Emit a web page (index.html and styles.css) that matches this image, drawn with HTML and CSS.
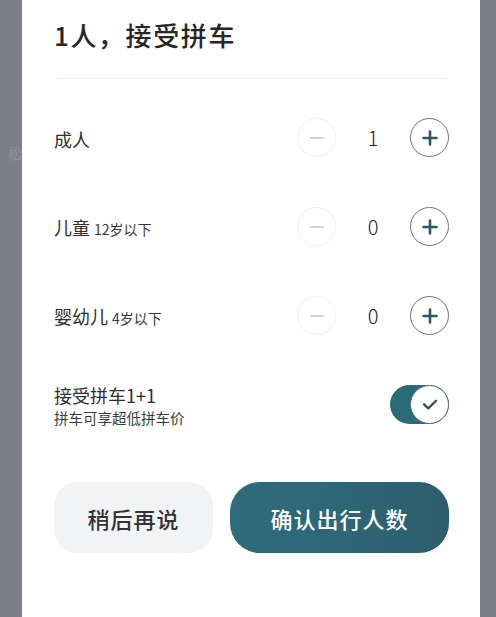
FILE: index.html
```html
<!DOCTYPE html>
<html lang="zh-CN">
<head>
<meta charset="utf-8">
<link rel="stylesheet" href="styles.css">
</head>
<body>
<div class="side side-left"><span class="ghost">松</span></div>
<div class="sheet">
  <h1 class="title">1人，接受拼车</h1>
  <div class="divider"></div>

  <div class="row">
    <div class="label">成人</div>
    <div class="stepper">
      <span class="btn btn-minus"><svg viewBox="0 0 24 24" width="24" height="24"><path d="M6 12h12" /></svg></span>
      <span class="count">1</span>
      <span class="btn btn-plus"><svg viewBox="0 0 24 24" width="24" height="24"><path d="M12 5.5v13M5.5 12h13" /></svg></span>
    </div>
  </div>

  <div class="row">
    <div class="label">儿童 <small>12岁以下</small></div>
    <div class="stepper">
      <span class="btn btn-minus"><svg viewBox="0 0 24 24" width="24" height="24"><path d="M6 12h12" /></svg></span>
      <span class="count">0</span>
      <span class="btn btn-plus"><svg viewBox="0 0 24 24" width="24" height="24"><path d="M12 5.5v13M5.5 12h13" /></svg></span>
    </div>
  </div>

  <div class="row">
    <div class="label">婴幼儿 <small>4岁以下</small></div>
    <div class="stepper">
      <span class="btn btn-minus"><svg viewBox="0 0 24 24" width="24" height="24"><path d="M6 12h12" /></svg></span>
      <span class="count">0</span>
      <span class="btn btn-plus"><svg viewBox="0 0 24 24" width="24" height="24"><path d="M12 5.5v13M5.5 12h13" /></svg></span>
    </div>
  </div>

  <div class="row row-pool">
    <div class="pool-text">
      <div class="pool-title">接受拼车1+1</div>
      <div class="pool-sub">拼车可享超低拼车价</div>
    </div>
    <div class="toggle">
      <span class="knob"><svg viewBox="0 0 24 24" width="26" height="26"><path d="M6.5 12.3l3.9 3.7 7.2-7" /></svg></span>
    </div>
  </div>

  <div class="actions">
    <button class="action action-later">稍后再说</button>
    <button class="action action-confirm">确认出行人数</button>
  </div>
</div>
<div class="side side-right"></div>
</body>
</html>
```

FILE: styles.css
```css
html, body {
  margin: 0;
  padding: 0;
}
body {
  width: 496px;
  height: 617px;
  overflow: hidden;
  display: flex;
  background: #7c7f87;
  font-family: "Noto Sans CJK SC", "Noto Sans", sans-serif;
  color: #222;
}
.side {
  flex: none;
  overflow: hidden;
}
.side-left {
  width: 22px;
}
.side-right {
  width: 16px;
}
.ghost {
  display: block;
  padding-top: 143px;
  padding-left: 8px;
  font-size: 14px;
  color: #8f9299;
  white-space: nowrap;
}
.sheet {
  flex: none;
  width: 458px;
  background: #fff;
  box-sizing: border-box;
  padding: 0 31px 0 32px;
}
.title {
  margin: 0;
  padding-top: 17px;
  font-size: 26px;
  line-height: 36px;
  font-weight: 500;
  letter-spacing: 1.6px;
  color: #262626;
}
.divider {
  margin: 25px 3px 14px;
  height: 1px;
  background: #ebebeb;
}
.row {
  height: 89px;
  display: flex;
  align-items: center;
  justify-content: space-between;
}
.label {
  font-size: 18px;
  line-height: 26px;
  color: #2e2e2e;
  padding-top: 3px;
}
.label small {
  font-size: 14px;
  color: #3a3a3a;
}
.stepper {
  display: flex;
  align-items: center;
}
.btn {
  width: 39px;
  height: 39px;
  box-sizing: border-box;
  border-radius: 50%;
  display: flex;
  align-items: center;
  justify-content: center;
}
.btn svg {
  fill: none;
  stroke-linecap: round;
}
.btn-minus {
  border: 1px solid #efefef;
}
.btn-minus svg {
  stroke: #d2d2d2;
  stroke-width: 2.2;
}
.btn-plus {
  border: 1px solid #6f7274;
}
.btn-plus svg {
  stroke: #2f5866;
  stroke-width: 2.6;
}
.count {
  width: 74px;
  text-align: center;
  font-size: 20px;
  font-weight: 300;
  color: #222;
}
.row-pool {
  height: auto;
  padding-top: 23px;
}
.pool-title {
  font-size: 18px;
  line-height: 24px;
  color: #2e2e2e;
}
.pool-sub {
  font-size: 14.5px;
  line-height: 21px;
  color: #3a3a3a;
}
.toggle {
  width: 59px;
  height: 39px;
  border-radius: 20px;
  background: #2d6a78;
  display: flex;
  justify-content: flex-end;
  margin-top: -3px;
}
.knob {
  width: 39px;
  height: 39px;
  box-sizing: border-box;
  border-radius: 50%;
  background: #fff;
  border: 1px solid #5d6f74;
  display: flex;
  align-items: center;
  justify-content: center;
}
.knob svg {
  fill: none;
  stroke: #2f4f58;
  stroke-width: 2.2;
  stroke-linecap: round;
  stroke-linejoin: round;
}
.actions {
  margin-top: 54px;
  display: flex;
  gap: 17px;
}
.action {
  height: 71px;
  border: none;
  font-family: inherit;
  font-size: 22px;
  font-weight: 500;
  letter-spacing: 1px;
  padding: 0;
  cursor: pointer;
}
.action-later {
  width: 159px;
  border-radius: 24px;
  background: #f2f3f5;
  color: #333;
}
.action-confirm {
  flex: 1;
  border-radius: 30px;
  background: linear-gradient(90deg, #306c7c 0%, #2e6575 60%, #2d5d6d 100%);
  color: #fff;
}
```
